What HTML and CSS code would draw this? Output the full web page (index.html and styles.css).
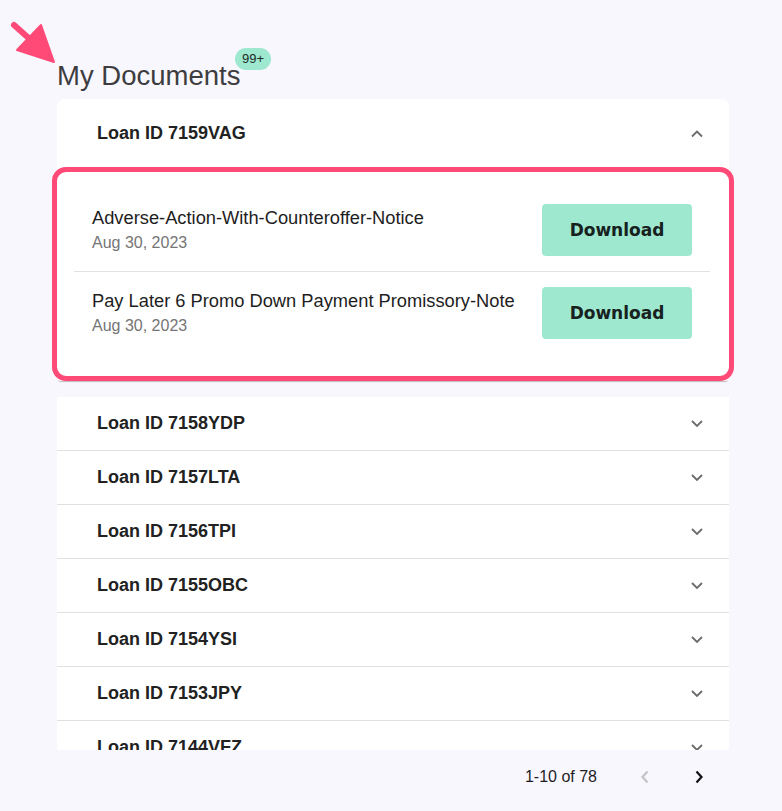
FILE: index.html
```html
<!DOCTYPE html>
<html lang="en">
<head>
    <meta charset="UTF-8">
    <meta name="viewport" content="width=device-width, initial-scale=1.0">
    <title>My Documents</title>
    <link rel="stylesheet" href="styles.css">
</head>
<body>
    <svg class="pointer" width="64" height="56" viewBox="0 0 64 56">
        <line x1="14" y1="11" x2="33" y2="28" stroke="#ff4a78" stroke-width="6" stroke-linecap="round" />
        <polygon points="54,48 17,36 41,11" fill="#ff4a78" stroke="#ff4a78" stroke-width="2" stroke-linejoin="round" />
    </svg>

    <div class="mainscreen">
        <div class="heading">
            <h1 class="title">My Documents</h1>
            <span class="badge">99+</span>
        </div>

        <div class="scroller">
            <div class="loan open">
                <div class="loan-head">
                    <span class="loan-id">Loan ID 7159VAG</span>
                    <svg class="chev" width="14" height="9" viewBox="0 0 14 9"><path d="M2 7.5 L7 2.5 L12 7.5" /></svg>
                </div>
                <div class="docs">
                    <div class="doc">
                        <div class="doc-info">
                            <p class="doc-name">Adverse-Action-With-Counteroffer-Notice</p>
                            <p class="doc-date">Aug 30, 2023</p>
                        </div>
                        <button class="button">Download</button>
                    </div>
                    <div class="doc">
                        <div class="doc-info">
                            <p class="doc-name">Pay Later 6 Promo Down Payment Promissory-Note</p>
                            <p class="doc-date">Aug 30, 2023</p>
                        </div>
                        <button class="button">Download</button>
                    </div>
                </div>
            </div>

            <div class="loans">
                <div class="loan-head row"><span class="loan-id">Loan ID 7158YDP</span><svg class="chev" width="14" height="9" viewBox="0 0 14 9"><path d="M2 2 L7 7 L12 2" /></svg></div>
                <div class="loan-head row"><span class="loan-id">Loan ID 7157LTA</span><svg class="chev" width="14" height="9" viewBox="0 0 14 9"><path d="M2 2 L7 7 L12 2" /></svg></div>
                <div class="loan-head row"><span class="loan-id">Loan ID 7156TPI</span><svg class="chev" width="14" height="9" viewBox="0 0 14 9"><path d="M2 2 L7 7 L12 2" /></svg></div>
                <div class="loan-head row"><span class="loan-id">Loan ID 7155OBC</span><svg class="chev" width="14" height="9" viewBox="0 0 14 9"><path d="M2 2 L7 7 L12 2" /></svg></div>
                <div class="loan-head row"><span class="loan-id">Loan ID 7154YSI</span><svg class="chev" width="14" height="9" viewBox="0 0 14 9"><path d="M2 2 L7 7 L12 2" /></svg></div>
                <div class="loan-head row"><span class="loan-id">Loan ID 7153JPY</span><svg class="chev" width="14" height="9" viewBox="0 0 14 9"><path d="M2 2 L7 7 L12 2" /></svg></div>
                <div class="loan-head row"><span class="loan-id">Loan ID 7144VFZ</span><svg class="chev" width="14" height="9" viewBox="0 0 14 9"><path d="M2 2 L7 7 L12 2" /></svg></div>
            </div>
        </div>

        <div class="pager">
            <span class="pager-text">1-10 of 78</span>
            <button class="page-btn prev"><svg width="10" height="16" viewBox="0 0 10 16"><path d="M7.5 2.5 L2.5 8 L7.5 13.5" /></svg></button>
            <button class="page-btn next"><svg width="10" height="16" viewBox="0 0 10 16"><path d="M2.5 2.5 L7.5 8 L2.5 13.5" /></svg></button>
        </div>
    </div>
</body>
</html>
```

FILE: styles.css
```css
body {
    font-family: 'Liberation Sans', Arial, sans-serif;
    margin: 0;
    padding: 0;
    background-color: #f9f7fe;
}

.pointer {
    position: absolute;
    left: 0;
    top: 14px;
}

.mainscreen {
    width: 672px;
    padding: 60px 0 0 57px;
}

.heading {
    position: relative;
    height: 32px;
    margin-bottom: 7px;
}

.title {
    margin: 0;
    font-size: 27.5px;
    line-height: 32px;
    font-weight: 400;
    color: #3d3d3f;
}

.badge {
    position: absolute;
    left: 178px;
    top: -12px;
    height: 22px;
    padding: 0 7px;
    border-radius: 11px;
    background: #9de8cf;
    color: #1d2b27;
    font-size: 13px;
    line-height: 22px;
}

.scroller {
    height: 651px;
    overflow: hidden;
    margin: 0 -6px;
    padding: 0 6px;
}

.loan {
    background: #ffffff;
    border-radius: 8px 8px 4px 4px;
    box-shadow: 0 2px 1px -1px rgba(0, 0, 0, 0.25);
    margin-bottom: 16px;
}

.loan-head {
    height: 68px;
    display: flex;
    align-items: center;
    justify-content: space-between;
    padding: 0 25px 0 40px;
}

.loan-id {
    font-size: 18px;
    font-weight: 700;
    color: #222222;
}

.chev path {
    fill: none;
    stroke: #6b6b6b;
    stroke-width: 1.8;
}

.docs {
    margin: 0 -5px;
    border: 5px solid #ff4a78;
    border-radius: 14px;
    padding: 17px 19px 22px 17px;
}

.doc {
    display: flex;
    align-items: center;
    justify-content: space-between;
    padding: 15px 18px;
}

.doc + .doc {
    border-top: 1px solid #e2e2e2;
}

.doc-info p {
    margin: 0;
    line-height: 22px;
}

.doc-name {
    font-size: 18.3px;
    color: #1e1e1e;
}

.doc-info .doc-date {
    margin-top: 3px;
    font-size: 16px;
    color: #757575;
}

.button {
    width: 150px;
    height: 52px;
    border: none;
    border-radius: 4px;
    background-color: #9de8cf;
    color: #17211e;
    font-family: 'DejaVu Sans', sans-serif;
    font-weight: 700;
    font-size: 17px;
}

.loans {
    background: #ffffff;
}

.row {
    height: 53px;
    border-bottom: 1px solid #e0e0e0;
}

.pager {
    display: flex;
    align-items: center;
    justify-content: flex-end;
    height: 54px;
    padding-right: 10px;
}

.pager-text {
    font-size: 16px;
    color: #1e1e1e;
    margin-right: 28px;
}

.page-btn {
    width: 40px;
    height: 40px;
    border: none;
    background: none;
    padding: 0;
    display: flex;
    align-items: center;
    justify-content: center;
}

.page-btn + .page-btn {
    margin-left: 14px;
}

.page-btn path {
    fill: none;
    stroke-width: 2.2;
}

.prev path {
    stroke: #c4c4c4;
}

.next path {
    stroke: #111111;
}
```
